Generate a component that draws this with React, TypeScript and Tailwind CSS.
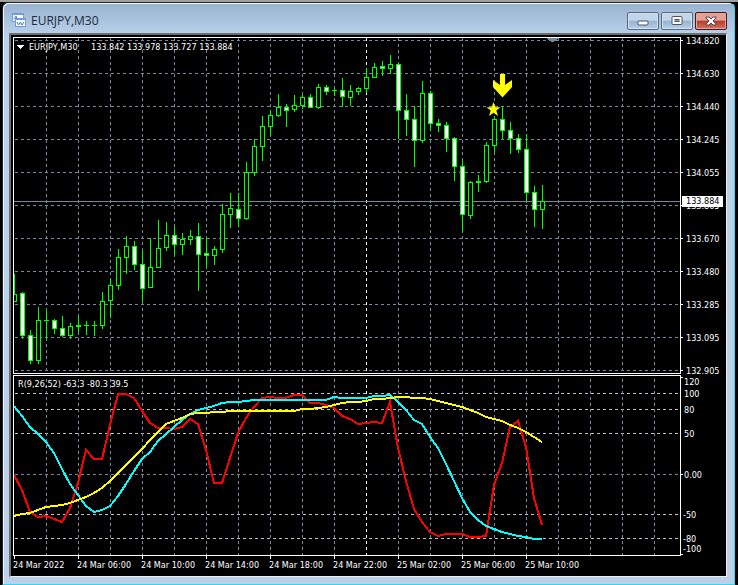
import React from "react";

type Candle = [high: number, top: number, bottom: number, low: number, down?: 1];

const STEP = 8;
const FIRST_X = 14;

// prettier-ignore
const candles: Candle[] = [
  [274, 294, 301, 301], [292, 293, 335, 338, 1], [330, 335, 360, 363, 1], [307, 320, 360, 363],
  [311, 320, 320, 338], [319, 320, 328, 333, 1], [316, 328, 335, 336, 1], [323, 326, 335, 338],
  [317, 325, 326, 331], [321, 325, 325, 334], [321, 325, 325, 335], [292, 301, 325, 328],
  [279, 285, 300, 317], [249, 257, 285, 289], [236, 246, 257, 273], [241, 246, 264, 269, 1],
  [251, 264, 288, 301, 1], [238, 267, 287, 287], [220, 248, 267, 267], [222, 235, 247, 250],
  [227, 235, 244, 254, 1], [233, 239, 244, 254], [230, 236, 239, 244], [223, 236, 254, 290, 1],
  [238, 253, 255, 267, 1], [246, 249, 255, 264], [204, 214, 249, 252], [193, 208, 214, 227],
  [193, 209, 218, 226, 1], [162, 172, 218, 219], [139, 146, 172, 175], [116, 126, 146, 160],
  [110, 115, 126, 135], [94, 107, 115, 116], [104, 107, 110, 126, 1], [95, 105, 109, 111],
  [95, 97, 105, 108], [94, 97, 107, 107, 1], [84, 87, 107, 108], [85, 87, 91, 94, 1],
  [88, 90, 90, 95], [78, 90, 96, 106, 1], [85, 91, 97, 105], [87, 88, 91, 94],
  [68, 77, 88, 92], [63, 67, 77, 77], [61, 66, 68, 75, 1], [55, 64, 68, 73],
  [63, 64, 110, 138, 1], [94, 110, 119, 135, 1], [106, 119, 140, 166, 1], [81, 93, 140, 142],
  [91, 93, 123, 130, 1], [119, 123, 125, 131, 1], [122, 125, 138, 151, 1], [137, 138, 166, 180, 1],
  [161, 166, 214, 231, 1], [181, 182, 215, 218], [175, 181, 182, 191], [142, 145, 181, 182],
  [118, 119, 145, 151], [106, 119, 130, 138, 1], [122, 130, 138, 153, 1], [134, 138, 149, 152, 1],
  [134, 149, 192, 200, 1], [186, 192, 209, 226, 1], [185, 201, 209, 228],
];

// prettier-ignore
const fast = [
  475, 490, 512, 517, 516, 519, 522, 508, 483, 450, 459, 459, 425, 394, 394, 398, 411, 423, 428, 428,
  429, 427, 419, 424, 450, 483, 483, 458, 433, 418, 407, 398, 397, 398, 398, 395, 395, 403, 403, 405,
  408, 416, 419, 424, 423, 422, 423, 402, 448, 481, 509, 522, 532, 536, 534, 534, 534, 537, 537, 536,
  485, 463, 427, 421, 447, 498, 525,
];

// prettier-ignore
const medium = [
  406, 416, 427, 434, 442, 453, 469, 484, 495, 506, 512, 510, 506, 496, 484, 471, 459, 452, 441, 434,
  427, 420, 414, 410, 408, 406, 403, 402, 402, 401, 400, 400, 400, 400, 400, 400, 400, 400, 400, 400,
  397, 398, 398, 398, 398, 396, 396, 395, 402, 410, 420, 424, 437, 448, 464, 481, 498, 512, 520, 526,
  529, 532, 534, 536, 537, 539, 539,
];

// prettier-ignore
const slow = [
  516, 514, 513, 510, 507, 506, 505, 503, 500, 497, 493, 488, 481, 473, 465, 457, 449, 440, 432, 424,
  421, 418, 414, 413, 413, 412, 412, 411, 411, 411, 411, 411, 411, 411, 411, 411, 409, 409, 408, 407,
  405, 403, 402, 402, 401, 399, 399, 398, 397, 397, 398, 398, 399, 401, 403, 405, 407, 410, 413, 417,
  419, 421, 425, 428, 432, 437, 442,
];

const prices = [
  "134.820", "134.630", "134.440", "134.245", "134.055", "133.865",
  "133.670", "133.480", "133.285", "133.095", "132.905",
];

const times = [
  "24 Mar 2022", "24 Mar 06:00", "24 Mar 10:00", "24 Mar 14:00", "24 Mar 18:00",
  "24 Mar 22:00", "25 Mar 02:00", "25 Mar 06:00", "25 Mar 10:00",
];

const levels = [
  { label: "120", y: 382, tick: 377 },
  { label: "100", y: 394, line: 393, color: "#c0c0c0" },
  { label: "80", y: 410, line: 409, color: "#c0c0c0" },
  { label: "50", y: 434, line: 433, color: "#c0c0c0" },
  { label: "0.00", y: 475, line: 474, color: "#778899", tick: 474 },
  { label: "-50", y: 515, line: 514, color: "#c0c0c0" },
  { label: "-80", y: 539, line: 538, color: "#c0c0c0" },
  { label: "-100", y: 549, tick: 554 },
];

const toPoints = (ys: number[]) =>
  ys.map((y, i) => `${FIRST_X + i * STEP},${y}`).join(" ");

function VerticalGrid({ top, bottom }: { top: number; bottom: number }) {
  return (
    <g stroke="#778899" strokeDasharray="3 3">
      {[...Array(60)].map((_, i) => {
        const x = 46.5 + i * 32;
        return (
          <line
            key={i}
            x1={x}
            x2={x}
            y1={top}
            y2={bottom}
            stroke={i === 10 ? "#ffffff" : undefined}
          />
        );
      })}
    </g>
  );
}

function CandleShape({ candle, index }: { candle: Candle; index: number }) {
  const [high, top, bottom, low, down] = candle;
  const x = FIRST_X + index * STEP;
  return (
    <g>
      <rect x={x} y={high} width="1" height={low - high + 1} fill="#00ff00" />
      <rect x={x - 2} y={top} width="5" height={bottom - top + 1} fill="#00ff00" />
      {bottom - top > 1 && (
        <rect
          x={x - 1}
          y={top + 1}
          width="3"
          height={bottom - top - 1}
          fill={down ? "#ffffff" : "#000000"}
        />
      )}
    </g>
  );
}

function PricePane() {
  return (
    <div className="flex h-[337px]">
      <div className="relative min-w-0 flex-1 border border-white">
        <svg className="block h-full w-full" shapeRendering="crispEdges">
          <g transform="translate(-14 -38)">
            <g stroke="#778899" strokeDasharray="3 3">
              {prices.map((price, i) => (
                <line key={price} x1="15" x2="3000" y1={40.5 + i * 33} y2={40.5 + i * 33} />
              ))}
            </g>
            <VerticalGrid top={38} bottom={373} />
            <rect x="14" y="201" width="3000" height="1" fill="#778899" />
            {candles.map((candle, i) => (
              <CandleShape key={i} candle={candle} index={i} />
            ))}
            <path d="M547 38h11v1l-1 0v1l-2 0v1h-1v1h-3v-1h-1v-1h-2v-1h-1z" fill="#778899" />
            <g fill="#ffff00" shapeRendering="auto">
              <path d="M500 74h5v11l7-5v7l-9.500 10.500-9.500-10.500v-7l7 5z" />
              <path d="M493.500 102l1.800 5.200h5.200l-4.200 3.300 1.700 5.500-4.500-3.300-4.500 3.300 1.700-5.500-4.200-3.300h5.200z" />
            </g>
          </g>
        </svg>
        <div className="absolute top-0 left-0 flex h-4 items-end pl-[3px] leading-[14px]">
          <svg width="7" height="4" className="mr-[5px] mb-[5px]" shapeRendering="crispEdges">
            <path d="M0 0h7v1h-1v1h-1v1h-1v1h-1v-1h-1v-1h-1v-1h-1z" fill="#ffffff" />
          </svg>
          <span className="w-[62px]">EURJPY,M30</span>
          <span>133.842 133.978 133.727 133.884</span>
        </div>
      </div>
      <ul className="relative w-[45px] pt-[1px]">
        {prices.map((price) => (
          <li key={price} className="flex h-[33px] items-start leading-[6px]">
            <span className="mt-[2px] mr-[3px] h-px w-[2px] bg-white" />
            {price}
          </li>
        ))}
        <li className="absolute top-[159px] left-[1px] h-[11px] w-[41px] bg-white pl-[4px] leading-[11px] text-black">
          133.884
        </li>
      </ul>
    </div>
  );
}

function IndicatorPane() {
  return (
    <div className="mt-px flex h-[181px]">
      <div className="relative min-w-0 flex-1 border border-white">
        <svg className="block h-full w-full" shapeRendering="crispEdges">
          <g transform="translate(-14 -376)">
            <g strokeDasharray="3 3">
              {levels.map(
                ({ label, line, color }) =>
                  line && (
                    <line
                      key={label}
                      x1="15"
                      x2="3000"
                      y1={line + 0.5}
                      y2={line + 0.5}
                      stroke={color}
                    />
                  ),
              )}
            </g>
            <VerticalGrid top={379} bottom={555} />
            <g fill="none" strokeWidth="2">
              <polyline points={toPoints(fast)} stroke="#ff0000" />
              <polyline points={toPoints(medium)} stroke="#00ffff" />
              <polyline points={toPoints(slow)} stroke="#ffff00" />
            </g>
          </g>
        </svg>
        <p className="absolute top-0 left-1 leading-4">R(9,26,52) -63.3 -80.3 39.5</p>
      </div>
      <svg className="block h-[181px] w-[45px]" fill="#ffffff">
        <g transform="translate(-681 -375)">
          {levels.map(({ label, y, tick }) => (
            <g key={label}>
              {tick && <rect x="681" y={tick} width="2" height="1" />}
              <text x={label.startsWith("-") ? 683 : 684} y={y + 3}>
                {label}
              </text>
            </g>
          ))}
        </g>
      </svg>
    </div>
  );
}

function TimeAxis() {
  return (
    <ul className="flex h-5 overflow-hidden whitespace-nowrap">
      {times.map((time) => (
        <li key={time} className="w-16 shrink-0">
          <span className="ml-[1px] block h-[3px] w-px bg-white" />
          <span className="block leading-3">{time}</span>
        </li>
      ))}
    </ul>
  );
}

const frameButton =
  "flex h-[18px] w-8 items-center justify-center rounded-[2px] border border-[#56677f] bg-linear-to-b from-[#c3d5e8] from-45% via-[#98b3cf] via-50% to-[#b7d0e8] shadow-[inset_0_0_0_1px_#d3e2f1]";

function TitleBar() {
  return (
    <header className="flex h-[29px] items-center pt-1 pl-[3px]">
      <svg width="15" height="15" viewBox="0 0 15 15" shapeRendering="crispEdges">
        <path d="M0.500 0.500h11v8h-11z" fill="#ffffff" stroke="#6f9be0" />
        <path d="M0 0h12v2H0z" fill="#6f9be0" />
        <path d="M2 6l2-3 1 3" fill="none" stroke="#4078d8" shapeRendering="auto" />
        <path d="M3.500 5.500h10v8h-10z" fill="#ffffff" stroke="#6f9be0" />
        <path d="M3 5h11v2H3z" fill="#6f9be0" />
        <path d="M5 9l1.500 3 2-3 1.500 3 2-3" fill="none" stroke="#4078d8" shapeRendering="auto" />
      </svg>
      <h1 className="ml-1 flex-1 font-['Open_Sans',sans-serif] text-xs text-[#1e2a3a]">EURJPY,M30</h1>
      <div className="flex gap-[2px]">
        <button type="button" aria-label="Minimize" className={frameButton}>
          <svg width="12" height="6" className="mt-1">
            <rect x="1" y="1" width="10" height="4" rx="1" fill="#ffffff" stroke="#4c5566" />
          </svg>
        </button>
        <button type="button" aria-label="Maximize" className={frameButton}>
          <svg width="12" height="10">
            <rect x="1" y="0.500" width="10" height="8" rx="1" fill="#ffffff" stroke="#4c5566" />
            <rect x="4" y="3.500" width="4" height="2" fill="#7fa6d0" stroke="#4c5566" />
          </svg>
        </button>
        <button
          type="button"
          aria-label="Close"
          className="flex h-[18px] w-8 items-center justify-center rounded-[2px] border border-[#4a1420] bg-linear-to-b from-[#e3a194] from-45% via-[#b8392a] via-50% to-[#cf7460] shadow-[inset_0_0_0_1px_#e2a99e]"
        >
          <svg width="12" height="10" viewBox="0 0 12 10">
            <path
              d="M1 1h3l2 2 2-2h3v1L8 5l3 3v1H8L6 7 4 9H1V8l3-3-3-3z"
              fill="#ffffff"
              stroke="#4c4450"
            />
          </svg>
        </button>
      </div>
    </header>
  );
}

export default function App() {
  return (
    <div className="min-h-screen bg-black">
      <div className="h-[2px] bg-[#a0a0a0]" />
      <main className="mr-[3px] ml-[2px] rounded-t-md border border-[#222222] border-b-[#35d5f0] border-r-[#35d5f0] bg-linear-to-b from-[#98b3d1] via-[#b9d1ea] via-[32px] to-[#bbd1ea] shadow-[inset_1px_1px_0_#f4f9ff]">
        <div className="pt-[1px] pr-[7px] pb-[7px] pl-[6px]">
          <TitleBar />
          <section className="border-2 border-r border-b border-[#6d6d6d] border-r-[#f0f0f0] border-b-[#f0f0f0] bg-black pt-[2px] pl-[2px] font-['DejaVu_Sans_Condensed','DejaVu_Sans',sans-serif] text-[9px] text-white">
            <PricePane />
            <IndicatorPane />
            <TimeAxis />
          </section>
        </div>
      </main>
    </div>
  );
}
